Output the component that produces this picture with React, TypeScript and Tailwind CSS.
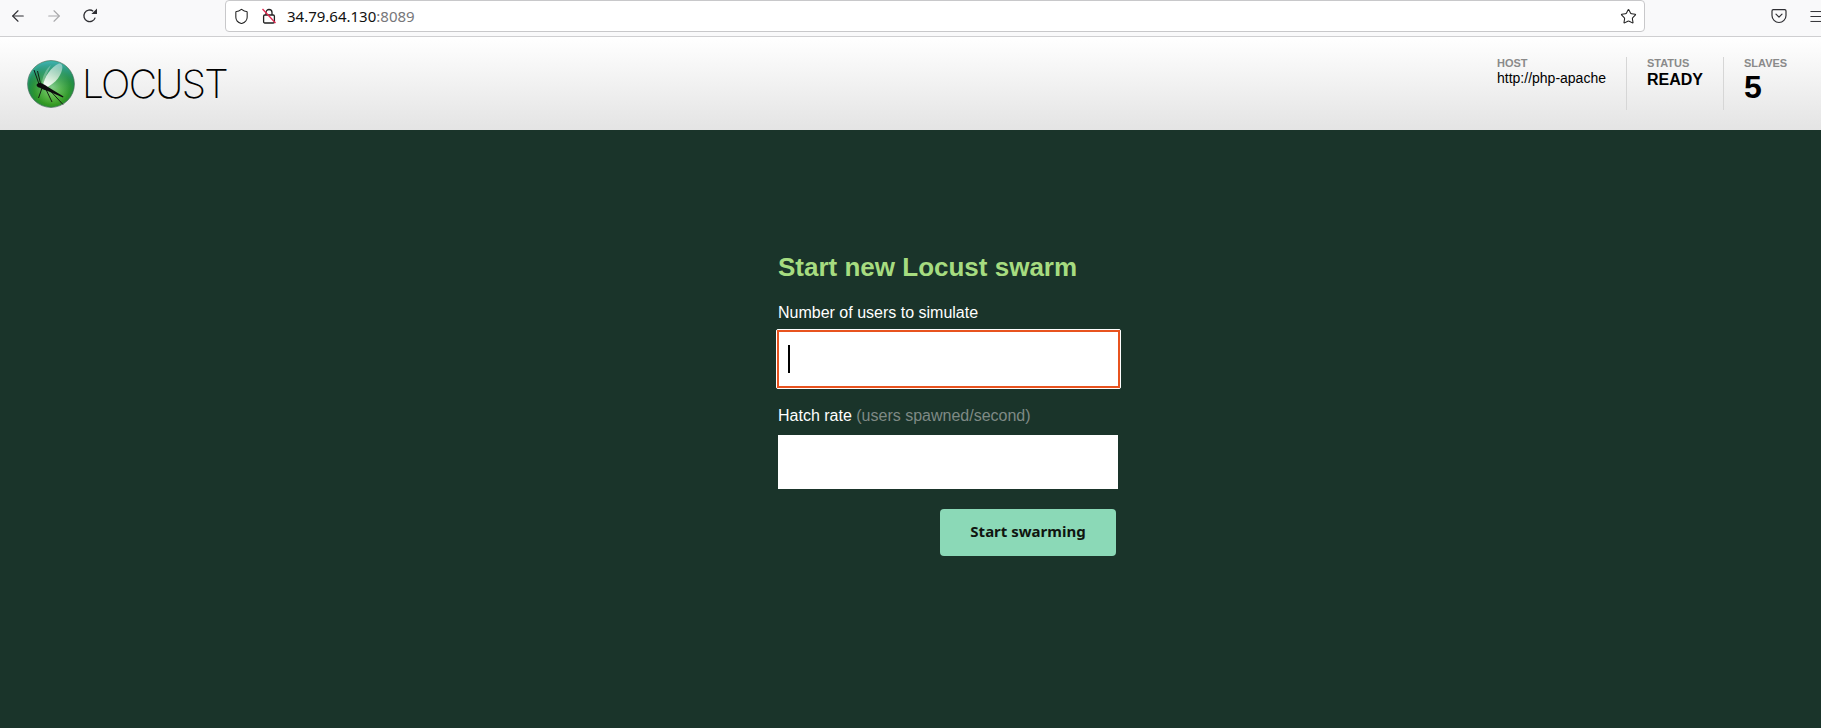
import { ArrowLeft, ArrowRight, Menu, Shield, Star } from "lucide-react";

const stats = [
  { label: "HOST", value: "http://php-apache", valueClass: "text-[14px] leading-[16px] text-black", width: "w-[129px]" },
  { label: "STATUS", value: "READY", valueClass: "text-[16px] leading-[20px] font-bold text-black", width: "w-[97px] pl-[20px] border-l border-[#d6d6d6]" },
  { label: "SLAVES", value: "5", valueClass: "text-[32px] leading-[35px] font-bold text-black", width: "w-[98px] pl-[20px] border-l border-[#d6d6d6]" },
];

function LocustLogo() {
  return (
    <svg width="48" height="48" viewBox="0 0 48 48">
      <defs>
        <radialGradient id="ball" cx="52%" cy="56%" r="54%">
          <stop offset="0%" stopColor="#b8eea0" />
          <stop offset="35%" stopColor="#74c84e" />
          <stop offset="72%" stopColor="#34981f" />
          <stop offset="90%" stopColor="#1f8a3a" />
          <stop offset="100%" stopColor="#38b88c" />
        </radialGradient>
        <linearGradient id="rim" x1="0" y1="0" x2="0" y2="1">
          <stop offset="0%" stopColor="#3fb0b0" />
          <stop offset="45%" stopColor="#1f8a6a" stopOpacity="0.45" />
          <stop offset="100%" stopColor="#1f9a50" stopOpacity="0" />
        </linearGradient>
        <linearGradient id="wing" x1="0.2" y1="1" x2="0.8" y2="0">
          <stop offset="0%" stopColor="#ffffff" stopOpacity="0.95" />
          <stop offset="100%" stopColor="#ffffff" stopOpacity="0.4" />
        </linearGradient>
      </defs>
      <circle cx="24" cy="24" r="23.4" fill="url(#ball)" stroke="#4a6a60" strokeWidth="0.7" />
      <circle cx="24" cy="24" r="22.8" fill="url(#rim)" />
      <path d="M16 26 C17 17 24 7 32 3.5 C35 3.5 36 6 35 10 C33 18 26 25 18 28 Z" fill="url(#wing)" />
      <path d="M15 23 C15.5 16 19 9 24 5 C21 11 18 17 16.5 24 Z" fill="#ffffff" fillOpacity="0.28" />
      <path d="M9.5 25 C10.5 23 13 22.5 15 23.5 C17 24.5 19 25.5 21 27 L36.5 36.5 L36 37.5 L19.5 30.5 C17 30 14.5 29 13 27.8 C11.5 27.5 10 26.8 9.5 25 Z" fill="#0c0c0c" />
      <path d="M12 24 L7 10 M13.5 23.5 L10.5 11 M15 28 L11.5 38 M23 30.5 L36 44.5 M19 29.5 L25 42" stroke="#0c0c0c" strokeWidth="0.9" fill="none" />
    </svg>
  );
}

function ReloadIcon() {
  return (
    <svg width="16" height="16" viewBox="0 0 16 16" fill="none">
      <path d="M13.2 9.6 A5.8 5.8 0 1 1 11.2 3.2" stroke="#2f2f33" strokeWidth="1.3" />
      <path d="M9.4 6 H15 V0.6 Z" fill="#2f2f33" />
    </svg>
  );
}

function PocketIcon() {
  return (
    <svg width="16" height="16" viewBox="0 0 16 16" fill="none" stroke="#2f2f33" strokeWidth="1.2">
      <path d="M2.3 1.6 H13.7 A1.4 1.4 0 0 1 15 3 V7.5 A7 7 0 0 1 1 7.5 V3 A1.4 1.4 0 0 1 2.3 1.6 Z" />
      <path d="M5 6.2 L8 9.2 L11 6.2" strokeLinecap="round" strokeLinejoin="round" />
    </svg>
  );
}

function InsecureLockIcon() {
  return (
    <svg width="16" height="16" viewBox="0 0 16 16" fill="none">
      <path d="M5 7 V4.5 A3 3 0 0 1 11 4.5 V7" stroke="#222" strokeWidth="1.3" />
      <rect x="2.6" y="7" width="10.8" height="8" rx="1.2" stroke="#222" strokeWidth="1.3" />
      <path d="M1.5 1 L14.5 15" stroke="#e22850" strokeWidth="1.3" />
    </svg>
  );
}

function BrowserBar() {
  return (
    <div className="flex h-[37px] items-start overflow-hidden border-b border-[#cfcfd1] bg-[#f9f9fa] text-[#2f2f33]">
      <div className="flex h-[32px] w-[225px] shrink-0 items-center pl-[9px]">
        <ArrowLeft size={18} strokeWidth={1.5} />
        <ArrowRight size={18} strokeWidth={1.5} className="ml-[18px] text-[#a8a8aa]" />
        <span className="ml-[19px]"><ReloadIcon /></span>
      </div>
      <div className="flex h-[32px] w-[1420px] shrink-0 items-center rounded-[4px] border border-[#c8c8ca] bg-white pl-[7px] pr-[7px]">
        <Shield size={17} strokeWidth={1.5} className="text-[#222]" />
        <span className="ml-[11px]"><InsecureLockIcon /></span>
        <span className="ml-[10px] font-['Noto_Sans',sans-serif] text-[15px] text-[#111]">
          34.79.64.130<span className="text-[#77777a]">:8089</span>
        </span>
        <Star size={17} strokeWidth={1.5} className="ml-auto text-[#222]" />
      </div>
      <div className="flex h-[32px] shrink-0 items-center pl-[126px]">
        <PocketIcon />
        <Menu size={17} strokeWidth={1.4} className="ml-[21px] shrink-0" />
      </div>
    </div>
  );
}

function Header() {
  return (
    <header className="flex h-[93px] items-start justify-between bg-gradient-to-b from-white to-[#e4e4e4] pl-[27px]">
      <div className="flex items-center pt-[22px]">
        <LocustLogo />
        <span className="ml-[7px] font-['Inter',sans-serif] text-[39px] font-extralight leading-[50px] tracking-[-1.8px] text-black">
          LOCUST
        </span>
      </div>
      <div className="flex pt-[20px] font-['Liberation_Sans',Arial,sans-serif]">
        {stats.map((stat) => (
          <div key={stat.label} className={`h-[53px] ${stat.width}`}>
            <div className="text-[11px] font-bold leading-[13px] text-[#8a8a8a]">{stat.label}</div>
            <div className={stat.valueClass}>{stat.value}</div>
          </div>
        ))}
      </div>
    </header>
  );
}

export default function App() {
  return (
    <div className="flex h-[728px] flex-col overflow-hidden bg-[#1a342a] font-['Liberation_Sans',Arial,sans-serif]">
      <BrowserBar />
      <Header />
      <main className="ml-[778px] w-[340px] pt-[118px]">
        <h2 className="text-[26px] font-bold leading-[38px] text-[#a6dc80]">Start new Locust swarm</h2>
        <label className="mt-[16px] block text-[16px] leading-[22px] text-white">Number of users to simulate</label>
        <div className="mt-[5px] -ml-[2px] h-[60px] w-[345px] rounded-[2px] border border-white bg-white">
          <div className="flex h-full items-center border-2 border-[#e8531f] pl-[9px]">
            <div className="h-[28px] w-[2px] bg-black" />
          </div>
        </div>
        <label className="mt-[16px] block text-[16px] leading-[22px] text-white">
          Hatch rate <span className="text-[#7f8a85]">(users spawned/second)</span>
        </label>
        <div className="mt-[8px] h-[54px] bg-white" />
        <div className="mt-[20px] flex justify-end pr-[2px]">
          <button className="h-[47px] w-[176px] rounded-[4px] bg-[#8bd9b7] pb-[2px] font-['Noto_Sans',sans-serif] text-[15px] font-bold text-[#101510]">
            Start swarming
          </button>
        </div>
      </main>
    </div>
  );
}
